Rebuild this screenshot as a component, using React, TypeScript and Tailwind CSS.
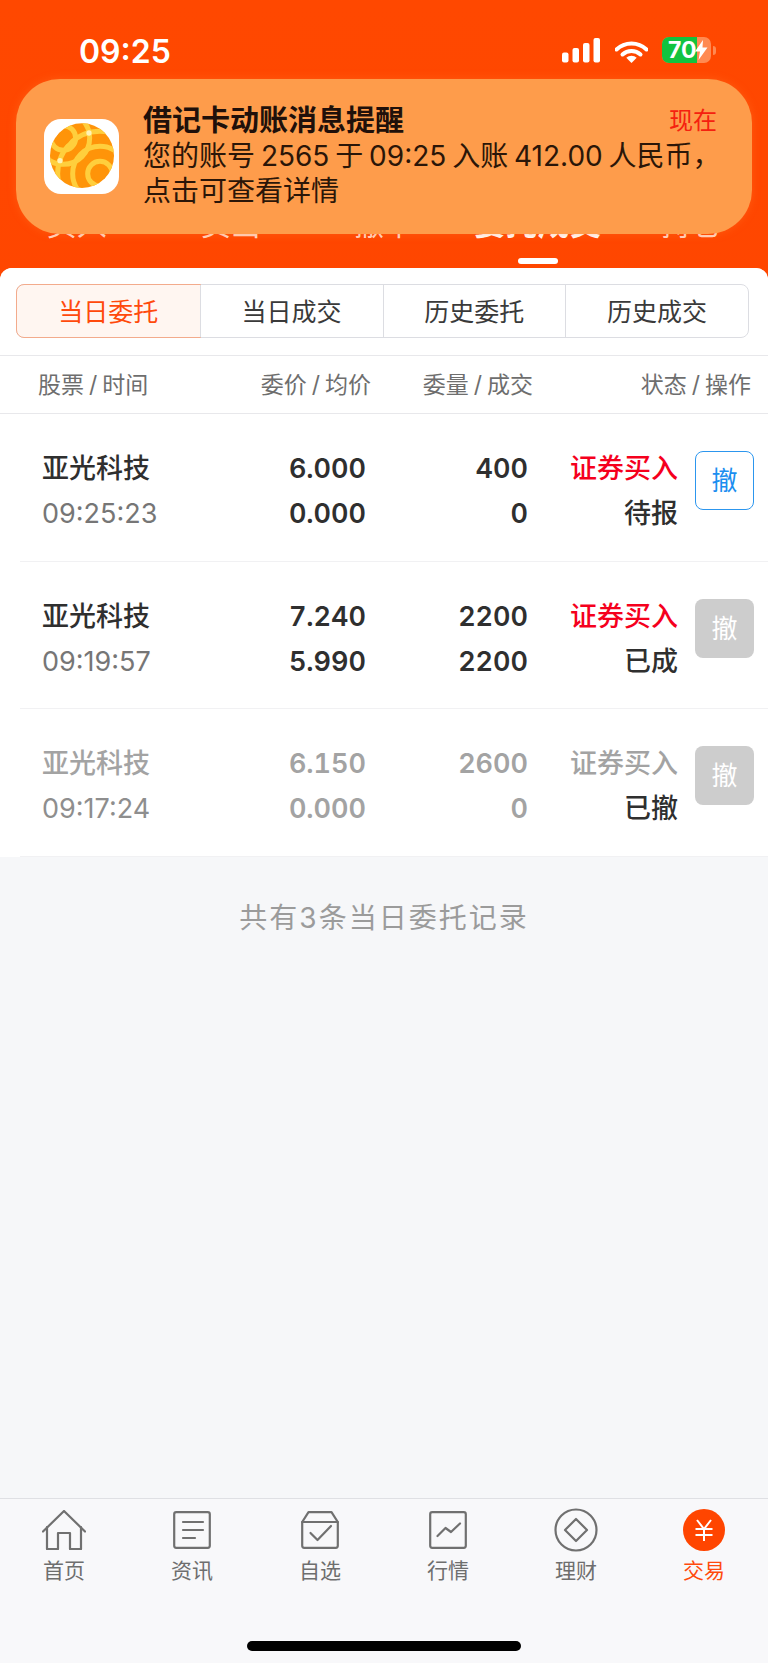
import React from "react";

const rows = [
  { name: "亚光科技", time: "09:25:23", price: "6.000", avg: "0.000", qty: "400", done: "0", kind: "证券买入", status: "待报", state: "open" },
  { name: "亚光科技", time: "09:19:57", price: "7.240", avg: "5.990", qty: "2200", done: "2200", kind: "证券买入", status: "已成", state: "filled" },
  { name: "亚光科技", time: "09:17:24", price: "6.150", avg: "0.000", qty: "2600", done: "0", kind: "证券买入", status: "已撤", state: "cancelled" },
];

// ─── Status bar ─────────────────────────────────────────────────────────────

function StatusBar() {
  return (
    <div className="flex h-[104px] items-start justify-between pl-[79px] pr-[52px] pt-[32px]">
      <span className="text-[32px] leading-[40px] font-semibold text-white">09:25</span>
      <div className="flex items-start pt-[6px]">
        <svg width="38" height="25" viewBox="0 0 38 25" fill="#fff">
          <rect x="0" y="14.5" width="6.5" height="10" rx="2" />
          <rect x="10.5" y="10" width="6.5" height="14.5" rx="2" />
          <rect x="21" y="5" width="6.5" height="19.5" rx="2" />
          <rect x="31.5" y="0" width="6.5" height="24.5" rx="2" />
        </svg>
        <svg className="ml-[15px] mt-[3px]" width="33" height="22" viewBox="0 0 33 22">
          <path d="M1.5 8.5a21.5 21.5 0 0 1 30 0" fill="none" stroke="#fff" strokeWidth="4" strokeLinecap="round" />
          <path d="M7.5 13.5a13 13 0 0 1 18 0" fill="none" stroke="#fff" strokeWidth="4" strokeLinecap="round" />
          <path d="M16.5 22l-5.2-5.2a7.5 7.5 0 0 1 10.4 0z" fill="#fff" />
        </svg>
        <div className="relative ml-[14px] -mt-[1px] flex h-[26px] w-[49px] overflow-hidden rounded-[7px] bg-[#ff8a52]">
          <div className="h-full w-[35px] bg-[#12c33f]" />
          <span className="absolute left-[6px] top-0 text-[23px] leading-[26px] font-bold text-white">70</span>
          <svg className="absolute left-[33px] top-[3px]" width="13" height="20" viewBox="0 0 13 20" fill="#fff">
            <path d="M8 0L0 11.5h5L3.5 20l9-12.5H7.5z" />
          </svg>
        </div>
        <div className="ml-[2px] mt-[8px] h-[9px] w-[3px] rounded-r-full bg-[#ff8a52]" />
      </div>
    </div>
  );
}

// ─── Top nav (mostly under the notification) ────────────────────────────────

function TopTabs() {
  const tabs = ["买入", "卖出", "撤单", "委托成交", "持仓"];
  return (
    <div className="relative h-[164px]">
      <div className="grid h-[140px] grid-cols-5 items-end">
        {tabs.map((t, i) => (
          <div
            key={t}
            className={
              i === 3
                ? "text-center text-[32px] leading-[40px] font-semibold text-white"
                : "text-center text-[30px] leading-[40px] text-[#ffd9c8]"
            }
          >
            {t}
          </div>
        ))}
      </div>
      <div className="absolute left-[518px] top-[154px] h-[6px] w-[40px] rounded-full bg-white" />
    </div>
  );
}

// ─── Notification banner ────────────────────────────────────────────────────

function AppIcon() {
  return (
    <div className="flex h-[75px] w-[75px] shrink-0 items-center justify-center rounded-[17px] bg-white">
      <svg width="75" height="75" viewBox="0 0 225 225">
        <defs>
          <clipPath id="globe">
            <ellipse cx="114" cy="110" rx="96" ry="97" />
          </clipPath>
        </defs>
        <g clipPath="url(#globe)">
          <rect width="225" height="225" fill="#ff9409" />
          <g fill="none" stroke="#ffcf3d" strokeWidth="15">
            <circle cx="168" cy="164" r="37" />
            <circle cx="168" cy="164" r="82" />
            <circle cx="168" cy="164" r="127" />
            <circle cx="58" cy="57" r="37" />
            <circle cx="58" cy="57" r="79" />
          </g>
          <circle cx="168" cy="164" r="20" fill="#ff9409" />
          <circle cx="58" cy="57" r="20" fill="#ff9409" />
          <circle cx="135" cy="42" r="8" fill="#fff3b8" />
          <circle cx="48" cy="125" r="8" fill="#fff3b8" />
        </g>
      </svg>
    </div>
  );
}

function Notification() {
  return (
    <div className="absolute left-[16px] top-[79px] flex h-[155px] w-[736px] items-start rounded-[44px] bg-[#fe9c4b] pl-[28px] pr-[35px] pt-[40px] shadow-[0_0_8px_rgba(255,120,40,0.4)]">
      <AppIcon />
      <div className="ml-[24px] -mt-[16px] min-w-0 flex-1 text-[28px] leading-[35.5px] text-[#2b1608]">
        <div className="flex items-center justify-between">
          <span className="text-[29px] font-bold text-[#20100a]">借记卡动账消息提醒</span>
          <span className="text-[24px] text-[#f5210f]">现在</span>
        </div>
        <div className="whitespace-nowrap [word-spacing:-2px]">您的账号 2565 于 09:25 入账 412.00 人民币，</div>
        <div>点击可查看详情</div>
      </div>
    </div>
  );
}

// ─── Segmented control ──────────────────────────────────────────────────────

function Segments() {
  const items = ["当日委托", "当日成交", "历史委托", "历史成交"];
  return (
    <div className="ml-[16px] mt-[16px] grid h-[54px] w-[733px] grid-cols-4 rounded-[8px] border border-[#dcdde2]">
      {items.map((t, i) => (
        <div
          key={t}
          className={
            i === 0
              ? "-m-px flex items-center justify-center rounded-l-[8px] border border-[#f3ab8c] bg-[#fff6f1] pt-[3px] text-[25px] text-[#ff4a0c]"
              : "flex items-center justify-center border-l border-[#dcdde2] pt-[3px] text-[25px] text-[#3a3a3a] first:border-l-0"
          }
        >
          {t}
        </div>
      ))}
    </div>
  );
}

function HeadLabel({ a, b, right }: { a: string; b: string; right?: boolean }) {
  return (
    <span className={right ? "text-right" : ""}>
      {a}
      <span className="mx-[5px]">/</span>
      {b}
    </span>
  );
}

function ColumnHeader() {
  return (
    <div className="mt-[17px] grid h-[59px] grid-cols-[195px_138px_162px_218px] items-center border-y border-[#e8e8eb] pl-[38px] pt-[1px] text-[23px] text-[#6e6e6e]">
      <HeadLabel a="股票" b="时间" />
      <HeadLabel a="委价" b="均价" right />
      <HeadLabel a="委量" b="成交" right />
      <HeadLabel a="状态" b="操作" right />
    </div>
  );
}

// ─── Order rows ─────────────────────────────────────────────────────────────

function OrderRow({ row }: { row: (typeof rows)[number] }) {
  const off = row.state === "cancelled";
  const main = off ? "text-[#a3a3a3]" : "text-[#2f2f2f]";
  return (
    <div className="ml-[20px] h-[147.5px] border-b border-[#f1f1f3] pl-[22px] pt-[33px]">
      <div className="grid grid-cols-[188px_136px_162px_150px_17px_59px] grid-rows-[45px_45px] items-center">
        <span className={`text-[27px] font-medium ${main}`}>{row.name}</span>
        <span className={`text-right text-[27px] font-semibold tabular-nums ${main}`}>{row.price}</span>
        <span className={`text-right text-[27px] font-semibold tabular-nums ${main}`}>{row.qty}</span>
        <span className={`text-right text-[27px] font-medium ${off ? "text-[#a3a3a3]" : "text-[#f5001d]"}`}>{row.kind}</span>
        <span />
        <div
          className={
            row.state === "open"
              ? "row-span-2 mt-[4px] flex h-[59px] w-[59px] items-center justify-center self-start rounded-[8px] border border-[#2c96ee] bg-white text-[26px] text-[#1b8ef0]"
              : "row-span-2 mt-[4px] flex h-[59px] w-[59px] items-center justify-center self-start rounded-[8px] bg-[#cdcdcd] text-[26px] text-white"
          }
        >
          撤
        </div>
        <span className={`text-[27px] ${off ? "text-[#8e8e8e]" : "text-[#767676]"}`}>{row.time}</span>
        <span className={`text-right text-[27px] font-semibold tabular-nums ${main}`}>{row.avg}</span>
        <span className={`text-right text-[27px] font-semibold tabular-nums ${main}`}>{row.done}</span>
        <span className="text-right text-[27px] font-medium text-[#2f2f2f]">{row.status}</span>
      </div>
    </div>
  );
}

// ─── Bottom tab bar ─────────────────────────────────────────────────────────

const gray = { fill: "none", stroke: "#707070", strokeWidth: 2.2, strokeLinejoin: "round" as const, strokeLinecap: "round" as const };

function HomeIcon() {
  return (
    <svg width="44" height="40" viewBox="0 0 44 40" {...gray}>
      <path d="M1 21.5L22 1l21 20.5" />
      <path d="M5 17v22h11V23h12v16h11V17" />
    </svg>
  );
}

function NewsIcon() {
  return (
    <svg width="38" height="38" viewBox="0 0 38 38" {...gray}>
      <rect x="1.2" y="1.2" width="35.6" height="35.6" rx="2" />
      <path d="M10 11h20M10 19h20M10 27h12" />
    </svg>
  );
}

function WatchIcon() {
  return (
    <svg width="38" height="38" viewBox="0 0 38 38" {...gray}>
      <path d="M1.2 11L7.5 1.2h23L36.8 11v23.8a2 2 0 0 1-2 2H3.2a2 2 0 0 1-2-2z" />
      <path d="M1.2 11h35.6" />
      <path d="M9.5 22l7 7 13.5-14" />
    </svg>
  );
}

function MarketIcon() {
  return (
    <svg width="38" height="38" viewBox="0 0 38 38" {...gray}>
      <rect x="1.2" y="1.2" width="35.6" height="35.6" rx="2" />
      <path d="M8.5 25l8-8 5.500 4 9-8.500" />
    </svg>
  );
}

function FinanceIcon() {
  return (
    <svg width="44" height="44" viewBox="0 0 44 44" {...gray}>
      <circle cx="22" cy="22" r="20.500" />
      <path d="M22 11l11 11-11 11-11-11z" />
    </svg>
  );
}

function TradeIcon() {
  return (
    <svg width="42" height="42" viewBox="0 0 42 42">
      <circle cx="21" cy="21" r="21" fill="#ff4500" />
      <path d="M14 11l7 9 7-9M12.500 20h17M12.500 26h17M21 20v12" fill="none" stroke="#fff" strokeWidth="2" />
    </svg>
  );
}

function BottomBar() {
  const items = [
    { label: "首页", icon: <HomeIcon /> },
    { label: "资讯", icon: <NewsIcon /> },
    { label: "自选", icon: <WatchIcon /> },
    { label: "行情", icon: <MarketIcon /> },
    { label: "理财", icon: <FinanceIcon /> },
    { label: "交易", icon: <TradeIcon />, active: true },
  ];
  return (
    <div className="h-[165px] border-t border-[#dfe0e4] bg-[#f8f8fa] pt-[9px]">
      <div className="grid grid-cols-6">
        {items.map((it) => (
          <div key={it.label} className="flex flex-col items-center">
            <div className="flex h-[44px] items-center justify-center">{it.icon}</div>
            <span className={it.active ? "mt-[5px] text-[21px] leading-[28px] text-[#ff4a0c]" : "mt-[5px] text-[21px] leading-[28px] text-[#6e6e6e]"}>
              {it.label}
            </span>
          </div>
        ))}
      </div>
      <div className="mx-auto mt-[56px] h-[10px] w-[274px] rounded-full bg-black" />
    </div>
  );
}

export default function App() {
  return (
    <div className="relative flex h-[1663px] w-[768px] flex-col overflow-hidden bg-gradient-to-b from-[#ff4800] to-[#ff3d00] [font-family:Inter,'Noto_Sans_CJK_SC',sans-serif]">
      <StatusBar />
      <TopTabs />
      <Notification />
      <div className="flex flex-1 flex-col overflow-hidden rounded-t-[12px] bg-[#f6f7f9]">
        <div className="bg-white">
          <Segments />
          <ColumnHeader />
          {rows.map((r) => (
            <OrderRow key={r.time} row={r} />
          ))}
        </div>
        <div className="flex-1 pt-[42px] text-center text-[28px] leading-[38px] tracking-[2px] text-[#9b9b9b]">共有3条当日委托记录</div>
        <BottomBar />
      </div>
    </div>
  );
}
